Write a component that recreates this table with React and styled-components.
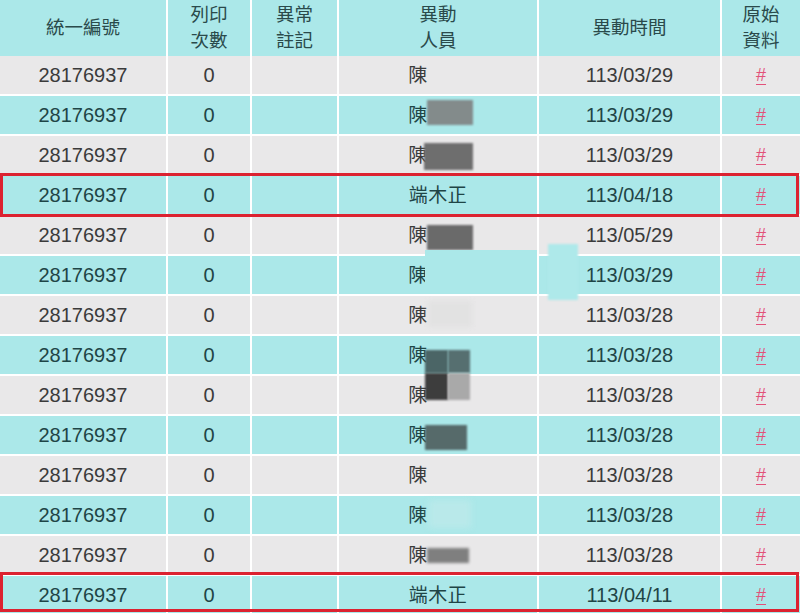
import React from "react";
import styled, { createGlobalStyle, css } from "styled-components";

const GlobalStyle = createGlobalStyle`
  html, body {
    margin: 0;
    padding: 0;
    background: #ffffff;
    overflow: hidden;
  }
  body {
    font-family: "Liberation Sans", "Noto Sans CJK TC", sans-serif;
  }
  #root {
    width: 800px;
    height: 613px;
    overflow: hidden;
  }
`;

const COLS = "166px 82px 85px 198px 181px 1fr";

const Table = styled.div`
  display: flex;
  flex-direction: column;
  gap: 2px;
  width: 800px;
  background: #ffffff;
`;

const Row = styled.div`
  position: relative;
  display: grid;
  grid-template-columns: ${COLS};
  column-gap: 2px;
  height: ${(p) => (p.$header ? 54 : 38)}px;
  ${(p) =>
    p.$marked &&
    css`
      &::after {
        content: "";
        position: absolute;
        left: 0;
        right: 1px;
        top: ${p.$markTop ?? -3}px;
        bottom: ${p.$markBottom ?? -3}px;
        border: 3px solid #dc2230;
        pointer-events: none;
        z-index: 3;
      }
    `}
`;

const Cell = styled.div`
  display: flex;
  align-items: center;
  justify-content: center;
  background: ${(p) => (p.$tone === "cyan" ? "#abe8e9" : "#e9e8e9")};
  color: ${(p) => (p.$tone === "cyan" ? "#1f4546" : "#3b3b3b")};
  font-size: 20px;
  white-space: nowrap;
`;

const HeadCell = styled(Cell)`
  background: #abe8e9;
  color: #2a4a4b;
  font-family: "Noto Sans CJK TC", sans-serif;
  font-size: 18.5px;
  line-height: 26px;
  text-align: center;
  padding-bottom: 5px;
  box-sizing: border-box;
  white-space: normal;
`;

const Name = styled.span`
  font-family: "Noto Sans CJK TC", sans-serif;
  font-size: 19px;
  line-height: 1;
  letter-spacing: 0.5px;
  padding-bottom: 3px;
`;

const Hidden = styled.span`
  display: inline-block;
  width: 40px;
`;

const Link = styled.a`
  color: #e2517a;
  font-size: 18px;
  text-decoration: underline;
  text-underline-offset: 3px;
  cursor: pointer;
`;

const Tile = styled.span`
  position: absolute;
  background: ${(p) => p.$c};
  filter: blur(${(p) => p.$blur ?? 0.8}px);
  z-index: 2;
  pointer-events: none;
`;

const rows = [
  { date: "113/03/29", tiles: [] },
  { date: "113/03/29", tiles: [{ x: 427, y: 4, w: 46, h: 25, c: "#838b8b" }] },
  { date: "113/03/29", tiles: [{ x: 424, y: 7, w: 49, h: 27, c: "#6e6e6e" }] },
  { date: "113/04/18", name: "端木正", marked: true },
  { date: "113/05/29", tiles: [{ x: 427, y: 9, w: 46, h: 25, c: "#6a6a6a" }] },
  {
    date: "113/03/29",
    tiles: [
      { x: 425, y: -6, w: 112, h: 40, c: "#abe8e9", blur: 0.6 },
      { x: 548, y: -12, w: 30, h: 56, c: "#aee9ea", blur: 0.8 },
    ],
  },
  { date: "113/03/28", tiles: [{ x: 428, y: 5, w: 44, h: 26, c: "#e2e2e2", blur: 2 }] },
  {
    date: "113/03/28",
    tiles: [
      { x: 425, y: 14, w: 23, h: 23, c: "#4b6566" },
      { x: 448, y: 14, w: 22, h: 23, c: "#566f70" },
      { x: 425, y: 37, w: 23, h: 27, c: "#3d3d3d" },
      { x: 448, y: 37, w: 22, h: 27, c: "#a9a9a9" },
    ],
  },
  { date: "113/03/28", tiles: [] },
  { date: "113/03/28", tiles: [{ x: 425, y: 9, w: 42, h: 25, c: "#566a6a" }] },
  { date: "113/03/28", tiles: [] },
  { date: "113/03/28", tiles: [{ x: 429, y: 4, w: 42, h: 28, c: "#b9e9ea", blur: 3 }] },
  { date: "113/03/28", tiles: [{ x: 427, y: 12, w: 42, h: 15, c: "#7f7f7f", blur: 1.5 }] },
  { date: "113/04/11", name: "端木正", marked: true, markTop: -4, markBottom: 2 },
];

export default function App() {
  return (
    <>
      <GlobalStyle />
      <Table>
        <Row $header>
          <HeadCell>統一編號</HeadCell>
          <HeadCell>
            列印
            <br />
            次數
          </HeadCell>
          <HeadCell>
            異常
            <br />
            註記
          </HeadCell>
          <HeadCell>
            異動
            <br />
            人員
          </HeadCell>
          <HeadCell>異動時間</HeadCell>
          <HeadCell>
            原始
            <br />
            資料
          </HeadCell>
        </Row>
        {rows.map((r, i) => {
          const tone = i % 2 === 0 ? "gray" : "cyan";
          return (
            <Row
              key={i}
              $marked={r.marked}
              $markTop={r.markTop}
              $markBottom={r.markBottom}
            >
              <Cell $tone={tone}>28176937</Cell>
              <Cell $tone={tone}>0</Cell>
              <Cell $tone={tone} />
              <Cell $tone={tone}>
                {r.name ? (
                  <Name>{r.name}</Name>
                ) : (
                  <Name>
                    陳<Hidden />
                  </Name>
                )}
              </Cell>
              <Cell $tone={tone}>{r.date}</Cell>
              <Cell $tone={tone}>
                <Link>#</Link>
              </Cell>
              {(r.tiles || []).map((t, j) => (
                <Tile
                  key={j}
                  $c={t.c}
                  $blur={t.blur}
                  style={{ left: t.x, top: t.y, width: t.w, height: t.h }}
                />
              ))}
            </Row>
          );
        })}
      </Table>
    </>
  );
}
